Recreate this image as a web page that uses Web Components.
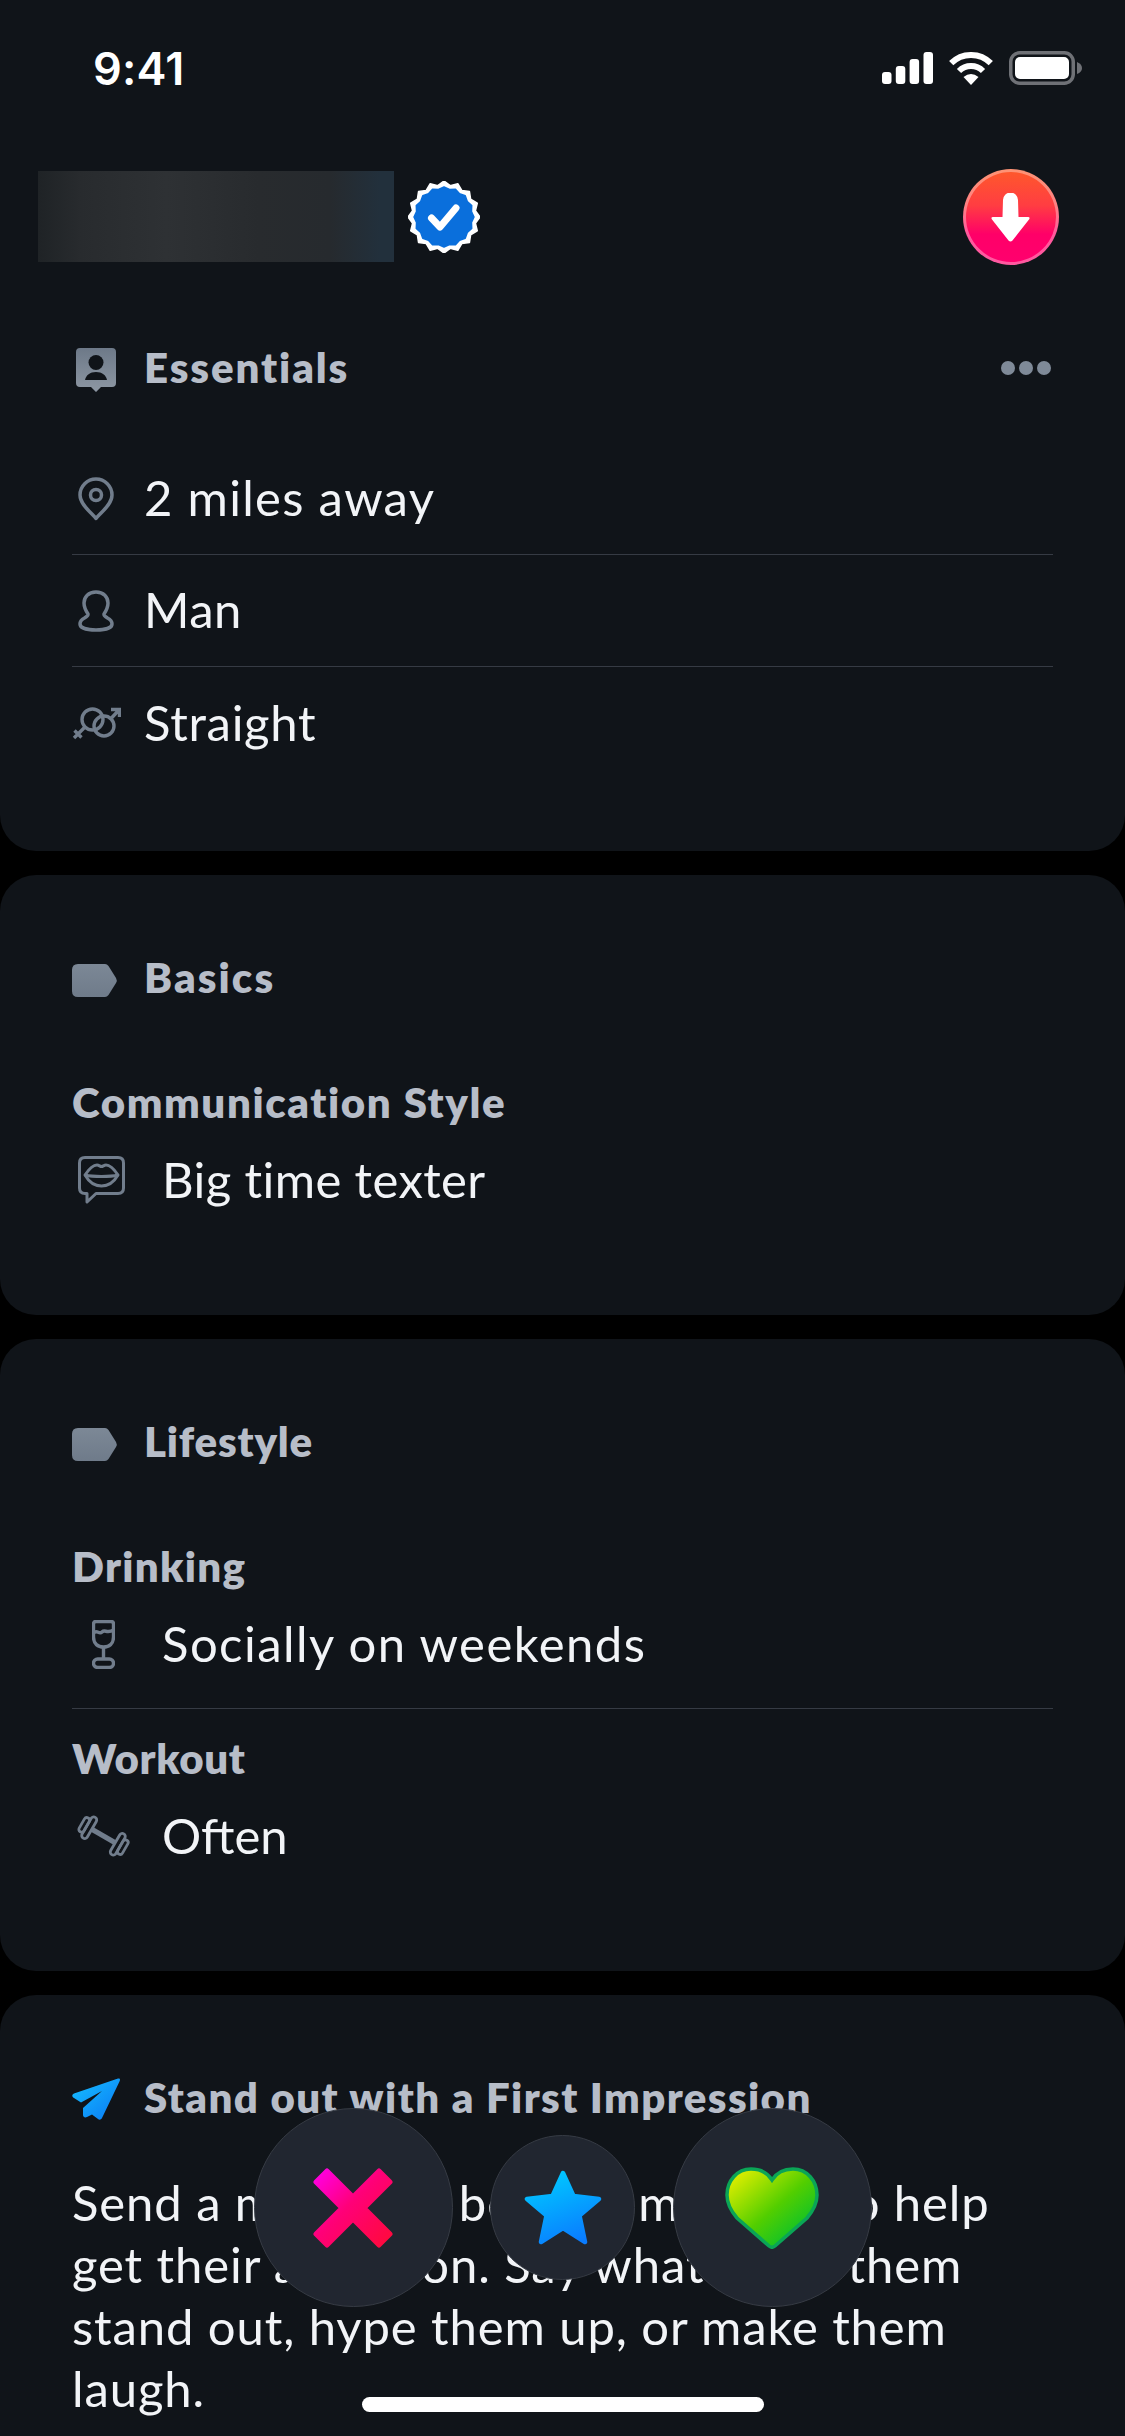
<!DOCTYPE html>
<html lang="en">
<head>
<meta charset="utf-8">
<title>Profile</title>
<style>
  html, body { margin: 0; padding: 0; background: #000; }
  body { width: 1125px; height: 2436px; overflow: hidden; position: relative; font-family: Lato, "Open Sans", sans-serif; }
  profile-page { height: 2436px; }
</style>
</head>
<body>
<profile-page>
  <info-card first>
    <status-bar></status-bar>
    <profile-head></profile-head>
    <card-head dots style="letter-spacing:1.9px">
      <app-icon slot="icon" name="badge"></app-icon>
      Essentials
    </card-head>
    <info-row style="letter-spacing:1.3px"><app-icon slot="icon" name="pin"></app-icon>2 miles away</info-row>
    <info-row style="letter-spacing:.5px"><app-icon slot="icon" name="person"></app-icon>Man</info-row>
    <info-row last style="letter-spacing:.7px"><app-icon slot="icon" name="straight"></app-icon>Straight</info-row>
  </info-card>

  <info-card>
    <card-head style="letter-spacing:2.1px"><app-icon slot="icon" name="tag"></app-icon>Basics</card-head>
    <info-field label="Communication Style" last style="--value-spacing:.4px;--label-spacing:1.6px">
      <app-icon slot="icon" name="lips"></app-icon>Big time texter
    </info-field>
  </info-card>

  <info-card>
    <card-head style="letter-spacing:.8px"><app-icon slot="icon" name="tag"></app-icon>Lifestyle</card-head>
    <info-field label="Drinking" style="--value-spacing:1.45px;--label-spacing:1.3px">
      <app-icon slot="icon" name="glass"></app-icon>Socially on weekends
    </info-field>
    <info-field label="Workout" last second style="--value-spacing:0;--label-spacing:.6px">
      <app-icon slot="icon" name="dumbbell"></app-icon>Often
    </info-field>
  </info-card>

  <info-card open>
    <card-head style="letter-spacing:1.4px"><app-icon slot="icon" name="plane"></app-icon>Stand out with a First Impression</card-head>
    <promo-text>Send a m<span style="letter-spacing:3.800px">essage </span>be<span style="letter-spacing:5px">fore </span>ma<span style="letter-spacing:-2px">tching t</span>o help<br>get their attention. Say what <span style="letter-spacing:-3.800px">makes</span> them<br>stand out, hype them up, or make them<br>laugh.</promo-text>
  </info-card>
</profile-page>

<action-bar>
  <action-button><app-icon name="nope"></app-icon></action-button>
  <action-button small><app-icon name="star"></app-icon></action-button>
  <action-button><app-icon name="heart"></app-icon></action-button>
</action-bar>
<home-bar></home-bar>

<script>
const GREY = "#717d8c";

function badgePath(cx, cy, outer, inner, count) {
  let d = "";
  const step = Math.PI / count;
  for (let i = 0; i < count * 2; i++) {
    const r = i % 2 === 0 ? outer : inner;
    const a = i * step - Math.PI / 2;
    const x = (cx + r * Math.cos(a)).toFixed(2);
    const y = (cy + r * Math.sin(a)).toFixed(2);
    d += (i === 0 ? "M" : "L") + x + " " + y;
  }
  return d + "Z";
}

const ICONS = {
  badge: `<svg width="40" height="44" viewBox="0 0 40 44" style="margin-top:6px">
      <defs><linearGradient id="b" x1="0" y1="0" x2="0" y2="1"><stop offset="0" stop-color="#6d7988"/><stop offset="1" stop-color="#8d97a3"/></linearGradient></defs>
      <path d="M4 0H36Q40 0 40 4V35Q40 39 36 39H25L20 44L15 39H4Q0 39 0 35V4Q0 0 4 0Z" fill="url(#b)"/>
      <circle cx="20" cy="14.5" r="7.5" fill="#101419"/>
      <path d="M9 32C10 27 14 24 20 24C26 24 30 27 31 32Z" fill="#101419"/>
    </svg>`,
  pin: `<svg width="36" height="44" viewBox="0 0 36 44" fill="none" stroke="${GREY}" stroke-width="3.5">
      <path d="M18 41.5C14 36 2 28 2 18A16 16 0 0 1 34 18C34 28 22 36 18 41.5Z" stroke-linejoin="round"/>
      <circle cx="18" cy="18" r="5.5"/>
    </svg>`,
  person: `<svg width="36" height="42" viewBox="0 0 36 42" fill="none" stroke="${GREY}" stroke-width="3.5">
      <path d="M18 2C10.500 2 6 7 6 13C6 18 8 21 10 24C10.500 25.500 9 26.500 6.500 28C3.500 29.500 2 31 2 34C2 38 9 40 18 40C27 40 34 38 34 34C34 31 32.500 29.500 29.500 28C27 26.500 25.500 25.500 26 24C28 21 30 18 30 13C30 7 25.500 2 18 2Z"/>
    </svg>`,
  straight: `<svg width="49" height="33" viewBox="0 0 49 33" fill="none" stroke="${GREY}" stroke-width="3.400">
      <circle cx="20.500" cy="12.500" r="10.500"/>
      <circle cx="32" cy="19" r="10"/>
      <path d="M39.500 11L47 3M39 2.500H47.500V10M13 20L2 31M2.500 23.500L9.500 30.500"/>
    </svg>`,
  tag: `<svg width="48" height="33" viewBox="0 0 48 33" style="margin-top:6px">
      <defs><linearGradient id="t" x1="0" y1="0" x2="0" y2="1"><stop offset="0" stop-color="#7c8896"/><stop offset="1" stop-color="#6f7b8a"/></linearGradient></defs>
      <path d="M6 0H33Q35 0 36.500 2L44 14Q45.500 16.500 44 19L36.500 31Q35 33 33 33H6Q0 33 0 27V6Q0 0 6 0Z" fill="url(#t)"/>
    </svg>`,
  lips: `<svg width="51" height="48" viewBox="0 0 51 48" fill="none" stroke="${GREY}" stroke-width="3" stroke-linejoin="round">
      <path d="M7 1.500H40Q45.500 1.500 45.500 7V32Q45.500 37.500 40 37.500H18L9 46V37.500H7Q1.500 37.500 1.500 32V7Q1.500 1.500 7 1.500Z"/>
      <path d="M7 19C11 13 16 9 19 9C21 9 22 10.500 23.500 10.500C25 10.500 26 9 28 9C31 9 36 13 40 19C36 26 30 30 23.500 30C17 30 11 26 7 19Z"/>
      <path d="M7 19C15 21 32 21 40 19"/>
    </svg>`,
  glass: `<svg width="23" height="49" viewBox="0 0 23 49" fill="none" stroke="${GREY}" stroke-width="3.400" stroke-linejoin="round">
      <path d="M4 1.500H19Q21.500 1.500 21.500 4V17C21.500 24 17 27 11.500 27C6 27 1.500 24 1.500 17V4Q1.500 1.500 4 1.500Z"/>
      <path d="M1.500 13C5 9 7 15 10 12C13 9 15 14 21.500 10M11.500 27V39"/>
      <rect x="1.500" y="39" width="20" height="8.500" rx="4.200"/>
    </svg>`,
  dumbbell: `<svg width="55" height="42" viewBox="0 0 55 42" style="overflow:visible">
      <g transform="rotate(30 27.500 21)" fill="none" stroke="${GREY}" stroke-width="2.800">
        <rect x="14" y="18.500" width="27" height="5" fill="${GREY}" stroke="none"/>
        <rect x="2.500" y="13" width="5.500" height="16" rx="2.700"/>
        <rect x="8" y="9" width="6" height="24" rx="3"/>
        <rect x="47" y="13" width="5.500" height="16" rx="2.700"/>
        <rect x="41" y="9" width="6" height="24" rx="3"/>
      </g>
    </svg>`,
  plane: `<svg width="48" height="42" viewBox="0 0 48 42" style="margin-top:3px">
      <defs><linearGradient id="p" x1="0" y1="0" x2="1" y2="1"><stop offset="0" stop-color="#16c0ff"/><stop offset="1" stop-color="#0a78f5"/></linearGradient></defs>
      <path d="M46 .5C48 0 48.500 1.500 47.500 3.500L30 40C29 42 27 42 26 41L20 36.500L15 39C13 40 11 39 11 37L11 30L30 13L9 24.500L2 20C-.5 18.500 0 16.500 2 15.500Z" fill="url(#p)"/>
    </svg>`,
  nope: `<svg width="80" height="80" viewBox="0 0 80 80">
      <defs><linearGradient id="n" x1="0" y1="0" x2="1" y2="1"><stop offset="0" stop-color="#ff00e8"/><stop offset=".45" stop-color="#ff0078"/><stop offset="1" stop-color="#ff0a3a"/></linearGradient></defs>
      <path d="M14 3L40 29L66 3L77 14L51 40L77 66L66 77L40 51L14 77L3 66L29 40L3 14Z" fill="url(#n)" stroke="url(#n)" stroke-width="5" stroke-linejoin="round"/>
    </svg>`,
  star: `<svg width="78" height="75" viewBox="0 0 78 75">
      <defs><linearGradient id="s" x1=".3" y1="0" x2=".7" y2="1"><stop offset="0" stop-color="#00c8ff"/><stop offset="1" stop-color="#0a7cff"/></linearGradient></defs>
      <path d="M39 3L49.500 26L75 29L55.500 45.500L61 72L39 58L17 72L22.500 45.500L3 29L28.500 26Z" fill="url(#s)" stroke="url(#s)" stroke-width="4.500" stroke-linejoin="round"/>
    </svg>`,
  heart: `<svg width="94" height="82" viewBox="0 0 94 82">
      <defs><linearGradient id="h" x1=".05" y1=".1" x2=".85" y2=".9"><stop offset="0" stop-color="#e0ee00"/><stop offset=".55" stop-color="#52ce00"/><stop offset="1" stop-color="#00c030"/></linearGradient></defs>
      <path d="M47 13C42 5 34 2 26 2C12 2 2 14 2 28C2 37 6 44 12 51L44 79Q47 81.500 50 79L82 51C88 44 92 37 92 28C92 14 82 2 68 2C60 2 52 5 47 13Z" fill="url(#h)" stroke="#0ba556" stroke-width="3.500"/>
    </svg>`,
};

class ProfilePage extends HTMLElement {
  connectedCallback() {
    this.attachShadow({ mode: "open" }).innerHTML = `
      <style>
        :host { display: flex; flex-direction: column; gap: 24px; background: #000; overflow: hidden; }
      </style>
      <slot></slot>
    `;
  }
}

class InfoCard extends HTMLElement {
  connectedCallback() {
    this.attachShadow({ mode: "open" }).innerHTML = `
      <style>
        :host {
          display: block;
          background: #101419;
          border-radius: 36px;
          padding: 72px 72px 87px;
          flex: none;
        }
        :host([first]) { border-radius: 0 0 36px 36px; padding-top: 0; padding-bottom: 72px; }
        :host([open]) { flex: 1; border-radius: 36px 36px 0 0; padding-bottom: 0; }
      </style>
      <slot></slot>
    `;
  }
}

class StatusBar extends HTMLElement {
  connectedCallback() {
    this.attachShadow({ mode: "open" }).innerHTML = `
      <style>
        :host {
          display: flex;
          align-items: center;
          justify-content: space-between;
          height: 138px;
          margin: 0 -29px 0 23px;
          color: #fff;
          box-sizing: border-box;
          padding-bottom: 2px;
        }
        .time { font: 600 45px/1 Inter, "Liberation Sans", sans-serif; letter-spacing: .2px; margin-left: -2px; }
        .icons { display: flex; align-items: center; gap: 15px; }
      </style>
      <span class="time">9:41</span>
      <span class="icons">
        <svg width="51" height="32" viewBox="0 0 51 32" fill="#fff">
          <rect x="0" y="20" width="9.500" height="12" rx="3"/>
          <rect x="13.800" y="14" width="9.500" height="18" rx="3"/>
          <rect x="27.600" y="7" width="9.500" height="25" rx="3"/>
          <rect x="41.500" y="0" width="9.500" height="32" rx="3"/>
        </svg>
        <svg width="46" height="33" viewBox="0 0 46 33" fill="none" stroke="#fff" stroke-width="6">
          <path d="M3.200 11.200A28 28 0 0 1 42.800 11.200"/>
          <path d="M11 19A17 17 0 0 1 35 19"/>
          <path d="M23 33L15.500 25Q23 19 30.500 25Z" fill="#fff" stroke="none"/>
        </svg>
        <svg width="73" height="34" viewBox="0 0 73 34">
          <rect x="1.750" y="1.750" width="62.500" height="30.500" rx="9" fill="none" stroke="#6f7176" stroke-width="3.500"/>
          <rect x="6" y="6" width="54" height="22" rx="5" fill="#fff"/>
          <path d="M68 11Q73 13 73 17Q73 21 68 23Z" fill="#6f7176"/>
        </svg>
      </span>
    `;
  }
}

class ProfileHead extends HTMLElement {
  connectedCallback() {
    this.attachShadow({ mode: "open" }).innerHTML = `
      <style>
        :host {
          display: flex;
          align-items: center;
          height: 96px;
          margin: 31px 0 72px -34px;
          margin-right: -6px;
        }
        .name {
          width: 356px;
          height: 91px;
          margin-top: -1px;
          background: linear-gradient(90deg, #1f2326 0%, #282b2e 12%, #2e3134 36%, #282b2e 62%, #262a2e 82%, #22303c 96%);
        }
        .verified { margin-left: 14px; }
        .save {
          margin-left: auto;
          width: 96px;
          height: 96px;
          box-sizing: border-box;
          border-radius: 50%;
          border: 3px solid rgba(255,255,255,.35);
          background: linear-gradient(180deg, #fe5a2a 0%, #ff3d42 38%, #ff0068 68%, #ff006e 100%);
          background-origin: border-box;
          display: flex;
          align-items: center;
          justify-content: center;
        }
        .save svg { margin-left: -1px; }
      </style>
      <div class="name"></div>
      <svg class="verified" width="72" height="72" viewBox="0 0 72 72">
        <path d="${badgePath(36, 36, 36, 32, 16)}" fill="#fff" stroke="#fff" stroke-width="1.500" stroke-linejoin="round"/>
        <path d="${badgePath(36, 36, 30, 28, 16)}" fill="#0a6fdc" stroke="#0a6fdc" stroke-width="1.500" stroke-linejoin="round"/>
        <path d="M23.500 37L32 46L48 27" fill="none" stroke="#fff" stroke-width="7" stroke-linejoin="round" stroke-linecap="round"/>
      </svg>
      <div class="save">
        <svg width="39" height="49" viewBox="0 0 39 49">
          <path d="M12 7A7.500 7.500 0 0 1 27 7L27.500 24H37Q39.500 24 38 26.500L21.500 47.500Q19.500 49.500 17.500 47.500L1 26.500Q-.5 24 2 24H11.500Z" fill="#fff"/>
        </svg>
      </div>
    `;
  }
}

class CardHead extends HTMLElement {
  connectedCallback() {
    this.attachShadow({ mode: "open" }).innerHTML = `
      <style>
        :host {
          display: flex;
          align-items: center;
          gap: 24px;
          height: 60px;
          color: #b7bdc8;
          font: 800 42px/60px Lato, sans-serif;
          letter-spacing: 1.500px;
          white-space: nowrap;
        }
        .icon { width: 48px; display: flex; justify-content: center; flex: none; }
        .dots { margin-left: auto; margin-right: 2px; margin-top: 2px; display: none; gap: 4px; }
        .dots i { width: 14px; height: 14px; border-radius: 50%; background: #7f8a98; display: block; }
        :host([dots]) .dots { display: flex; }
      </style>
      <span class="icon"><slot name="icon"></slot></span>
      <span><slot></slot></span>
      <span class="dots"><i></i><i></i><i></i></span>
    `;
  }
}

class InfoRow extends HTMLElement {
  connectedCallback() {
    this.attachShadow({ mode: "open" }).innerHTML = `
      <style>
        :host {
          display: flex;
          align-items: center;
          gap: 24px;
          height: 112px;
          box-sizing: border-box;
          color: #f2f4f7;
          font: 400 49px/60px Lato, sans-serif;
          letter-spacing: .9px;
          border-bottom: 1px solid #363b44;
        }
        :host([last]) { border-bottom: 0; }
        .icon { width: 48px; display: flex; justify-content: center; flex: none; }
        .text { margin-top: -3px; }
      </style>
      <span class="icon"><slot name="icon"></slot></span>
      <span class="text"><slot></slot></span>
    `;
    if (!this.previousElementSibling.matches("info-row")) this.style.marginTop = "46px";
  }
}

class InfoField extends HTMLElement {
  connectedCallback() {
    const label = this.getAttribute("label");
    this.attachShadow({ mode: "open" }).innerHTML = `
      <style>
        :host {
          display: block;
          margin-top: 65px;
          padding-bottom: 16px;
          border-bottom: 1px solid #363b44;
        }
        :host([second]) { margin-top: 0; padding-top: 19px; }
        :host([last]) { border-bottom: 0; padding-bottom: 0; }
        .label {
          color: #b7bdc8;
          font: 800 42px/60px Lato, sans-serif;
          letter-spacing: var(--label-spacing, 1.500px);
        }
        .value {
          display: flex;
          align-items: center;
          gap: 27px;
          height: 96px;
          color: #f2f4f7;
          font: 400 49px/60px Lato, sans-serif;
          letter-spacing: var(--value-spacing, .9px);
        }
        .icon { width: 63px; display: flex; justify-content: center; flex: none; }
        .text { margin-top: -3px; }
      </style>
      <div class="label">${label}</div>
      <div class="value">
        <span class="icon"><slot name="icon"></slot></span>
        <span class="text"><slot></slot></span>
      </div>
    `;
  }
}

class PromoText extends HTMLElement {
  connectedCallback() {
    this.attachShadow({ mode: "open" }).innerHTML = `
      <style>
        :host {
          display: block;
          margin-top: 44px;
          color: #f2f4f7;
          font: 400 49px/62px Lato, sans-serif;
          letter-spacing: .9px;
          white-space: nowrap;
        }
      </style>
      <slot></slot>
    `;
  }
}

class ActionBar extends HTMLElement {
  connectedCallback() {
    this.attachShadow({ mode: "open" }).innerHTML = `
      <style>
        :host {
          position: absolute;
          left: 0;
          right: 0;
          top: 2108px;
          height: 199px;
          display: flex;
          align-items: center;
          justify-content: center;
          gap: 37.500px;
        }
      </style>
      <slot></slot>
    `;
  }
}

class ActionButton extends HTMLElement {
  connectedCallback() {
    this.attachShadow({ mode: "open" }).innerHTML = `
      <style>
        :host {
          width: 199px;
          height: 199px;
          box-sizing: border-box;
          display: flex;
          align-items: center;
          justify-content: center;
          border-radius: 50%;
          background: #212630;
          border: 1.500px solid #363b44;
        }
        :host([small]) { width: 145px; height: 145px; }
      </style>
      <slot></slot>
    `;
  }
}

class HomeBar extends HTMLElement {
  connectedCallback() {
    this.attachShadow({ mode: "open" }).innerHTML = `
      <style>
        :host {
          position: absolute;
          left: 362px;
          top: 2397px;
          width: 402px;
          height: 15px;
          border-radius: 8px;
          background: #fff;
        }
      </style>
    `;
  }
}

class AppIcon extends HTMLElement {
  connectedCallback() {
    const name = this.getAttribute("name");
    this.attachShadow({ mode: "open" }).innerHTML = `
      <style>
        :host { display: flex; }
      </style>
      ${ICONS[name]}
    `;
  }
}

customElements.define("app-icon", AppIcon);
customElements.define("profile-page", ProfilePage);
customElements.define("info-card", InfoCard);
customElements.define("status-bar", StatusBar);
customElements.define("profile-head", ProfileHead);
customElements.define("card-head", CardHead);
customElements.define("info-row", InfoRow);
customElements.define("info-field", InfoField);
customElements.define("promo-text", PromoText);
customElements.define("action-bar", ActionBar);
customElements.define("action-button", ActionButton);
customElements.define("home-bar", HomeBar);
</script>
</body>
</html>
